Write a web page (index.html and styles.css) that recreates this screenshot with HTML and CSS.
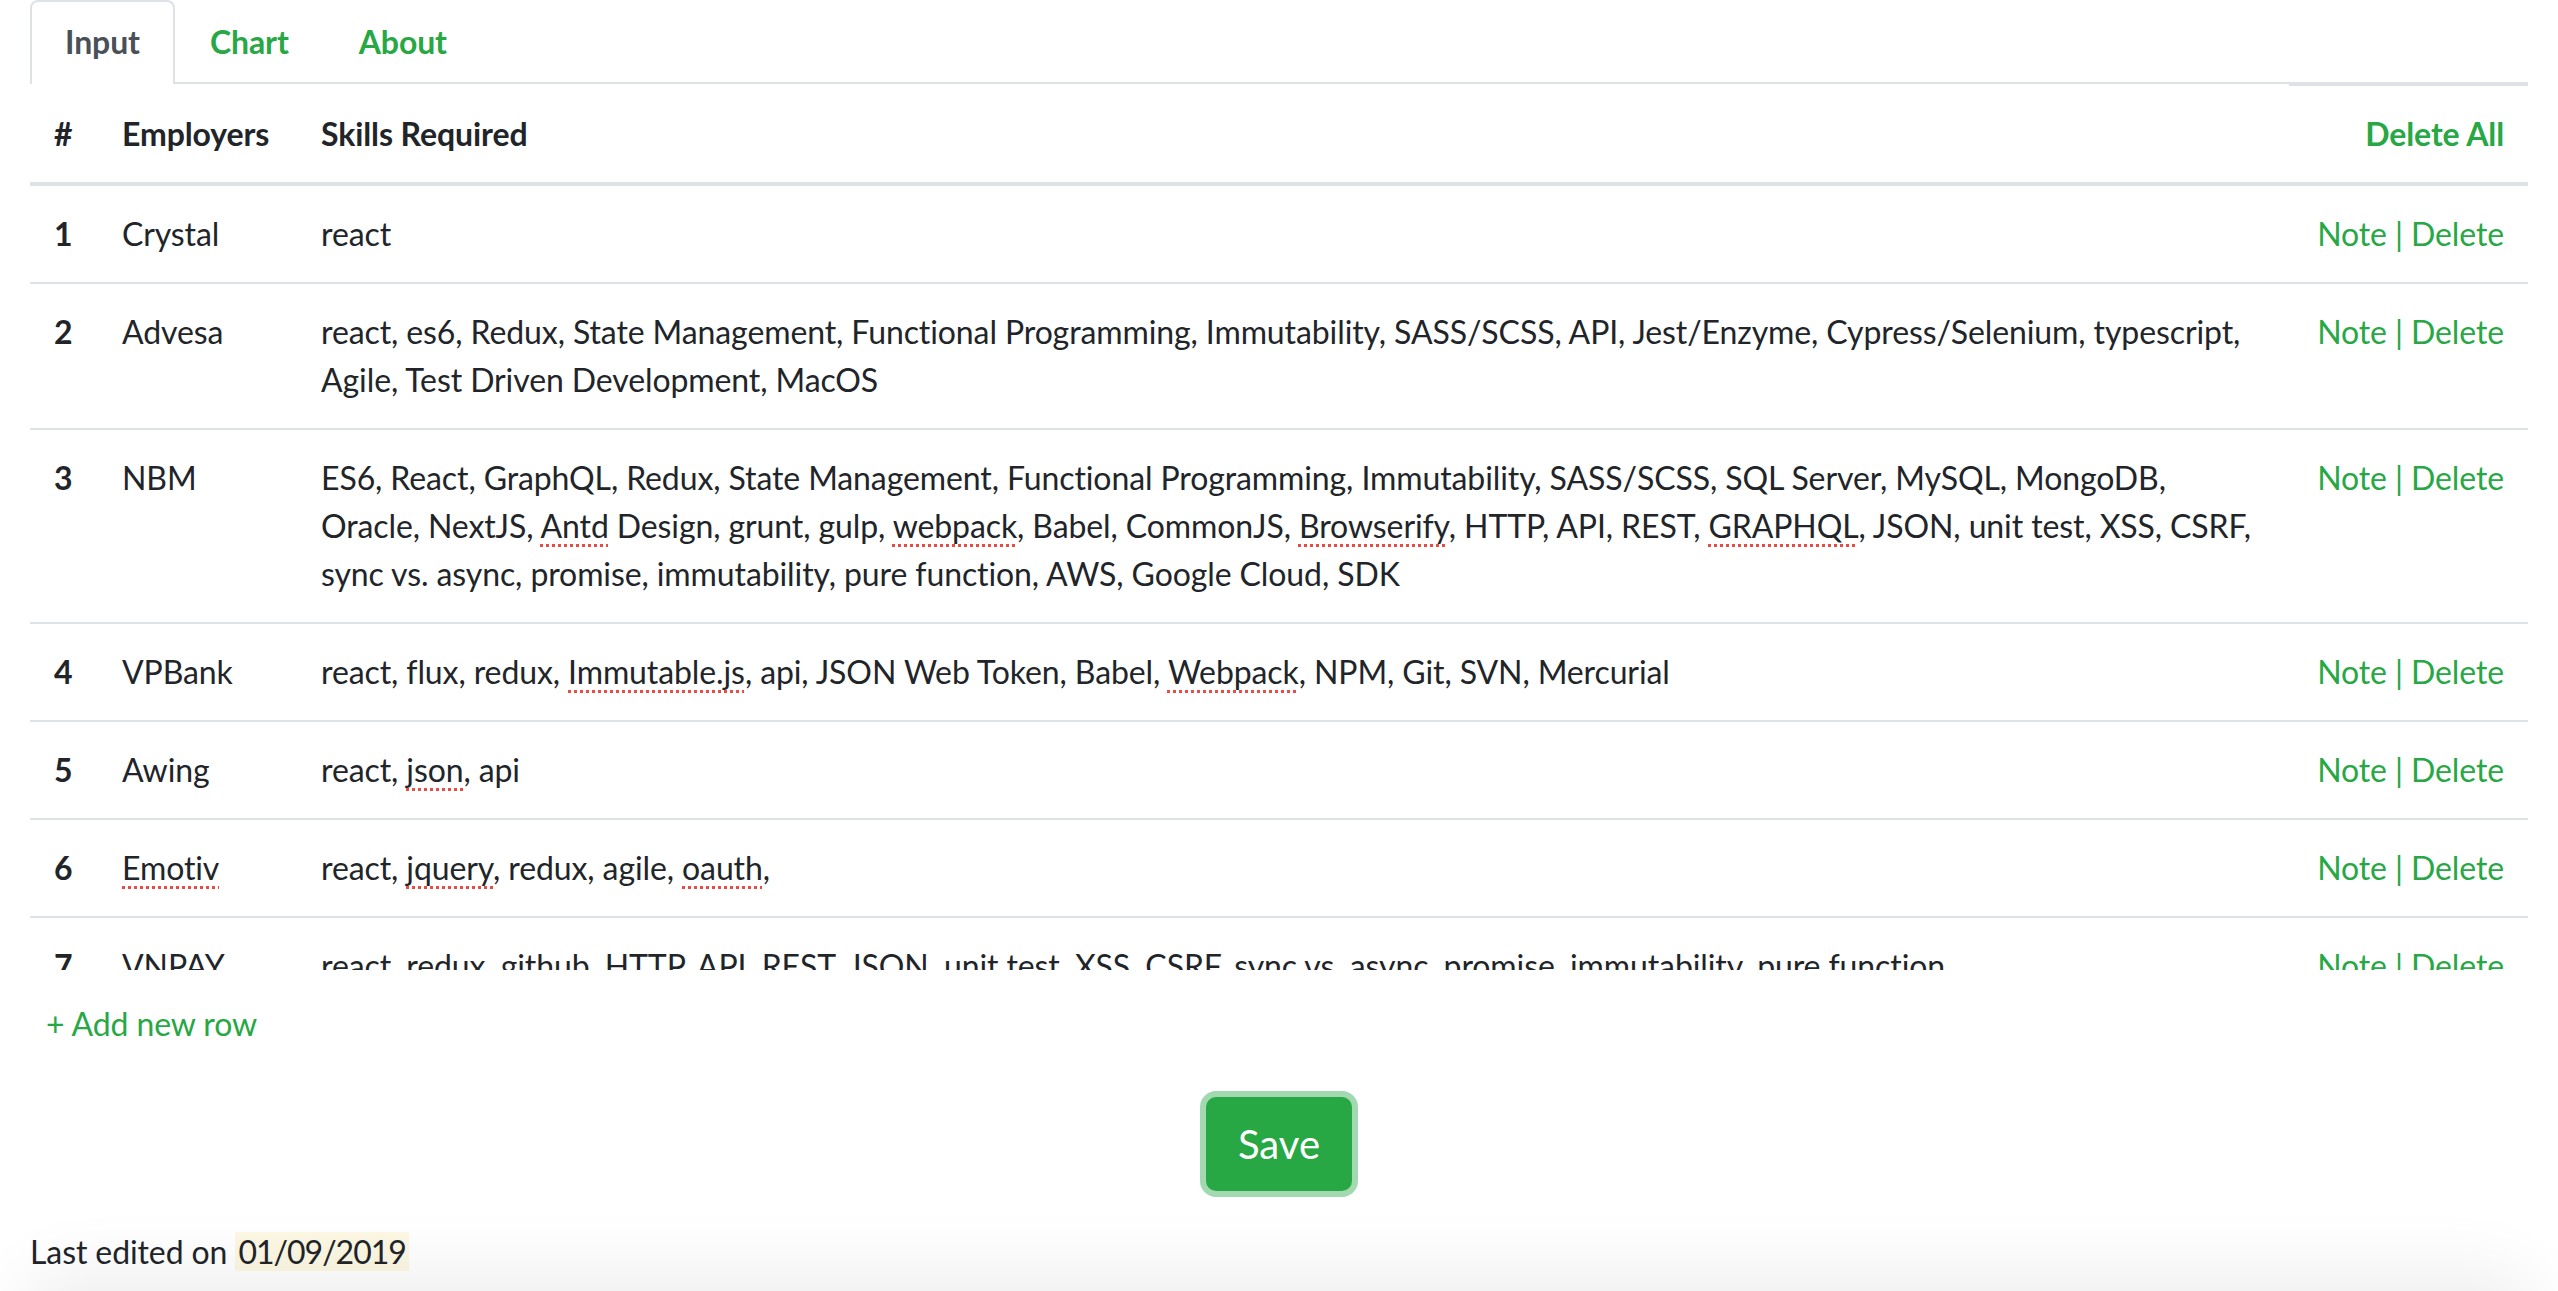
FILE: index.html
```html
<!DOCTYPE html>
<html lang="en">
<head>
<meta charset="utf-8">
<title>Employers</title>
<link rel="stylesheet" href="styles.css">
</head>
<body>
<div class="page">
  <nav class="tabs">
    <a class="tab active">Input</a>
    <a class="tab">Chart</a>
    <a class="tab">About</a>
  </nav>

  <div class="table-wrap">
    <table class="grid">
      <colgroup>
        <col class="c-num">
        <col class="c-emp">
        <col class="c-skill">
        <col class="c-act">
      </colgroup>
      <thead>
        <tr>
          <th>#</th>
          <th>Employers</th>
          <th>Skills Required</th>
          <th class="act act-head"><a class="link">Delete All</a></th>
        </tr>
      </thead>
      <tbody>
        <tr>
          <td class="num">1</td>
          <td>Crystal</td>
          <td>react</td>
          <td class="act"><a class="link">Note</a> | <a class="link">Delete</a></td>
        </tr>
        <tr>
          <td class="num">2</td>
          <td>Advesa</td>
          <td>react, es6, Redux, State Management, Functional Programming, Immutability, SASS/SCSS, API, Jest/Enzyme, Cypress/Selenium, typescript, Agile, Test Driven Development, MacOS</td>
          <td class="act"><a class="link">Note</a> | <a class="link">Delete</a></td>
        </tr>
        <tr>
          <td class="num">3</td>
          <td>NBM</td>
          <td>ES6, React, GraphQL, Redux, State Management, Functional Programming, Immutability, SASS/SCSS, SQL Server, MySQL, MongoDB, Oracle, NextJS, <span class="sp">Antd</span> Design, grunt, gulp, <span class="sp">webpack</span>, Babel, CommonJS, <span class="sp">Browserify</span>, HTTP, API, REST, <span class="sp">GRAPHQL</span>, JSON, unit test, XSS, CSRF, sync vs. async, promise, immutability, pure function, AWS, Google Cloud, SDK</td>
          <td class="act"><a class="link">Note</a> | <a class="link">Delete</a></td>
        </tr>
        <tr>
          <td class="num">4</td>
          <td>VPBank</td>
          <td>react, flux, redux, <span class="sp">Immutable.js</span>, api, JSON Web Token, Babel, <span class="sp">Webpack</span>, NPM, Git, SVN, Mercurial</td>
          <td class="act"><a class="link">Note</a> | <a class="link">Delete</a></td>
        </tr>
        <tr>
          <td class="num">5</td>
          <td>Awing</td>
          <td>react, <span class="sp">json</span>, api</td>
          <td class="act"><a class="link">Note</a> | <a class="link">Delete</a></td>
        </tr>
        <tr>
          <td class="num">6</td>
          <td><span class="sp">Emotiv</span></td>
          <td>react, <span class="sp">jquery</span>, redux, agile, <span class="sp">oauth</span>,</td>
          <td class="act"><a class="link">Note</a> | <a class="link">Delete</a></td>
        </tr>
        <tr>
          <td class="num">7</td>
          <td>VNPAY</td>
          <td>react, redux, github, HTTP, API, REST, JSON, unit test, XSS, CSRF, sync vs. async, promise, immutability, pure function</td>
          <td class="act"><a class="link">Note</a> | <a class="link">Delete</a></td>
        </tr>
      </tbody>
    </table>
  </div>

  <div class="add-row"><a class="link add-link">+ Add new row</a></div>

  <div class="save-wrap"><button class="save-btn" type="button">Save</button></div>

  <p class="edited">Last edited on <mark class="date">01/09/2019</mark></p>
</div>
<div class="bottom-shade"></div>
</body>
</html>
```

FILE: styles.css
```css
html, body {
  margin: 0;
  padding: 0;
  background: #ffffff;
}

body {
  font-family: Lato, "Open Sans", "Liberation Sans", sans-serif;
  font-size: 32px;
  line-height: 48px;
  letter-spacing: -0.1px;
  color: #212529;
  overflow: hidden;
  height: 1291px;
}

.page {
  padding: 0 30px;
}

.link {
  color: #28a745;
  text-decoration: none;
  cursor: pointer;
}

/* Tabs */
.tabs {
  display: flex;
  border-bottom: 2px solid #dee2e6;
}

.tab {
  display: block;
  padding: 16px 33px 18px;
  line-height: 48px;
  font-weight: 700;
  color: #28a745;
  border: 2px solid transparent;
  border-bottom: 0;
  border-radius: 8px 8px 0 0;
  margin-bottom: -2px;
}

.tab.active {
  color: #495057;
  background: #ffffff;
  border-color: #dee2e6;
}

/* Table */
.table-wrap {
  height: 886px;
  overflow: hidden;
}

.grid {
  width: 100%;
  table-layout: fixed;
  border-collapse: separate;
  border-spacing: 0;
}

.c-num { width: 68px; }
.c-emp { width: 199px; }
.c-act { width: 239px; }

.grid th,
.grid td {
  padding: 24px;
  vertical-align: top;
  text-align: left;
  line-height: 48px;
}

.grid th {
  font-weight: 700;
  border-bottom: 4px solid #dee2e6;
  padding-top: 26px;
}

.grid th.act-head {
  border-top: 2px solid #dee2e6;
  padding-top: 24px;
}

.grid td {
  border-bottom: 2px solid #dee2e6;
}

.grid .act {
  text-align: right;
  color: #28a745;
}

.grid td.num {
  font-weight: 700;
}

.sp {
  text-decoration-line: underline;
  text-decoration-style: dotted;
  text-decoration-color: #ec4a44;
  text-decoration-thickness: 3px;
  text-underline-offset: 6px;
}

/* Add row */
.add-row {
  margin-top: 18px;
}

.add-link {
  display: inline-block;
  padding: 12px 16px;
  line-height: 48px;
}

/* Save */
.save-wrap {
  display: flex;
  justify-content: center;
  margin-top: 37px;
}

.save-btn {
  font-family: Lato, "Open Sans", "Liberation Sans", sans-serif;
  font-size: 40px;
  line-height: 60px;
  padding: 16px 32px;
  color: #ffffff;
  background: #28a745;
  border: 2px solid #28a745;
  border-radius: 10px;
  box-shadow: 0 0 0 6px rgba(72, 180, 97, 0.5);
  cursor: pointer;
  width: 146px;
  height: 94px;
  display: flex;
  align-items: center;
  justify-content: center;
}

/* Last edited */
.edited {
  margin: 37px 0 0 0;
  line-height: 48px;
}

.date {
  background: #fcf8e3;
  color: #212529;
  padding: 0 3px;
  letter-spacing: -1px;
}

/* Bottom shading */
.bottom-shade {
  position: fixed;
  left: 40px;
  right: 40px;
  bottom: -60px;
  height: 60px;
  border-radius: 40px;
  background: #e8e8e8;
  box-shadow: 0 0 70px 20px rgba(0, 0, 0, 0.07);
  pointer-events: none;
}
```
